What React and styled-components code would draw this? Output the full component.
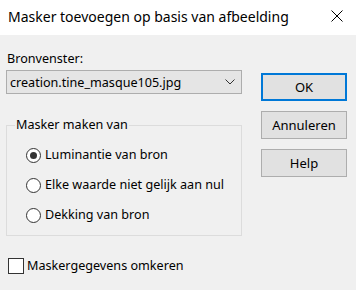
import styled, { createGlobalStyle } from 'styled-components';

const Global = createGlobalStyle`
  html, body { margin: 0; padding: 0; background: #f0f0f0; }
  body { font-family: "Noto Sans", "Open Sans", sans-serif; font-size: 12.6px; color: #000; }
`

const Window = styled.div`
  width: 356px;
  height: 290px;
  background: #f0f0f0;
  overflow: hidden;
`

const TitleBar = styled.div`
  height: 35px;
  background: #fff;
  display: flex;
  align-items: center;
  justify-content: space-between;
  padding: 0 13px 0 8px;
  box-sizing: border-box;
`

const Title = styled.div`
  font-size: 14px;
  line-height: 20px;
  white-space: nowrap;
  margin-top: -1px;
`

const Close = styled.svg`
  width: 12px;
  height: 12px;
  margin-top: -3px;
`

const Body = styled.div`
  display: grid;
  grid-template-columns: 236px 86px;
  column-gap: 19px;
  padding: 16px 0 0 6px;
`

const Left = styled.div`
  display: flex;
  flex-direction: column;
`

const Label = styled.div`
  line-height: 16px;
  padding-left: 1px;
  margin-bottom: 3px;
`

const Combo = styled.div`
  height: 24px;
  box-sizing: border-box;
  border: 1px solid #adadad;
  background: #e5e5e5;
  display: flex;
  align-items: center;
  justify-content: space-between;
  padding: 0 6px 0 3px;
`

const GroupBox = styled.div`
  position: relative;
  margin-top: 31px;
  height: 111px;
  box-sizing: border-box;
  border: 1px solid #dcdcdc;
  padding: 21px 0 0 19px;
  display: flex;
  flex-direction: column;
  gap: 14px;
`

const Legend = styled.div`
  position: absolute;
  top: -9px;
  left: 8px;
  padding: 0 1px;
  line-height: 16px;
  background: #f0f0f0;
`

const Option = styled.div`
  display: flex;
  align-items: center;
  gap: 4px;
  height: 16px;
  line-height: 16px;
  white-space: nowrap;
`

const Radio = styled.span`
  width: 15px;
  height: 15px;
  box-sizing: border-box;
  border-radius: 50%;
  border: 1px solid #333;
  background: #fff;
  display: flex;
  align-items: center;
  justify-content: center;
  flex: none;
  &::after {
    content: '';
    width: 7px;
    height: 7px;
    border-radius: 50%;
    background: ${props => props.checked ? '#333' : 'transparent'};
  }
`

const CheckRow = styled(Option)`
  margin-top: 22px;
  padding-left: 2px;
  gap: 3px;
`

const Check = styled.span`
  width: 16px;
  height: 16px;
  box-sizing: border-box;
  border: 1px solid #333;
  background: #fff;
  flex: none;
`

const Buttons = styled.div`
  display: flex;
  flex-direction: column;
  gap: 10px;
  padding-top: 22px;
`

const Button = styled.div`
  height: 28px;
  box-sizing: border-box;
  border: ${props => props.primary ? '2px solid #0078d7' : '1px solid #adadad'};
  background: #e1e1e1;
  display: flex;
  align-items: center;
  justify-content: center;
  font-size: 13px;
`

export default function App(){
    return(
        <Window>
            <Global />
            <TitleBar>
                <Title>Masker toevoegen op basis van afbeelding</Title>
                <Close viewBox="0 0 12 12">
                    <path d="M0.5 0.5 L11.5 11.5 M11.5 0.5 L0.5 11.5" stroke="#000" strokeWidth="1" fill="none" />
                </Close>
            </TitleBar>
            <Body>
                <Left>
                    <Label>Bronvenster:</Label>
                    <Combo>
                        <span>creation.tine_masque105.jpg</span>
                        <svg width="10" height="6" viewBox="0 0 10 6">
                            <path d="M0.5 0.5 L5 5 L9.5 0.5" stroke="#333" strokeWidth="1" fill="none" />
                        </svg>
                    </Combo>
                    <GroupBox>
                        <Legend>Masker maken van</Legend>
                        <Option><Radio checked />Luminantie van bron</Option>
                        <Option><Radio />Elke waarde niet gelijk aan nul</Option>
                        <Option><Radio />Dekking van bron</Option>
                    </GroupBox>
                    <CheckRow><Check />Maskergegevens omkeren</CheckRow>
                </Left>
                <Buttons>
                    <Button primary>OK</Button>
                    <Button>Annuleren</Button>
                    <Button>Help</Button>
                </Buttons>
            </Body>
        </Window>
    )
}
